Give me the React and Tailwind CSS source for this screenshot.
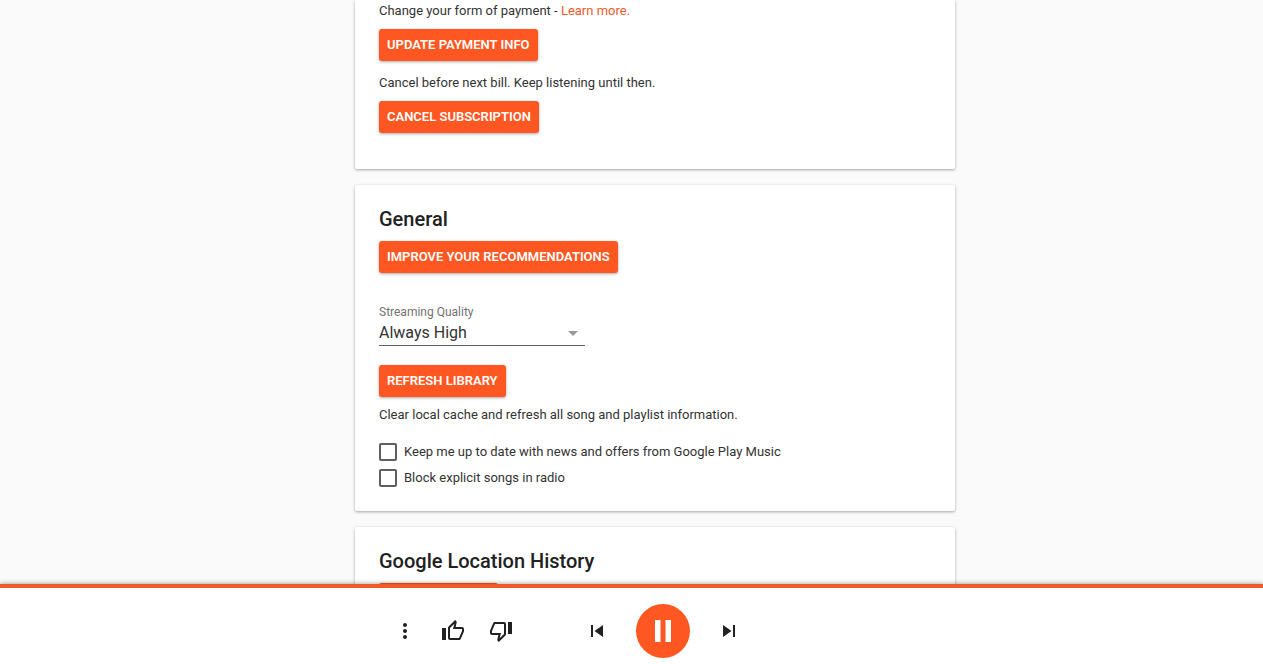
import React, { useState } from "react";
import { MdMoreVert, MdSkipNext, MdSkipPrevious } from "react-icons/md";

const Card = ({ title, className = "", children }) => (
  <section className={`w-full max-w-[600px] shrink-0 bg-white px-6 shadow-[0_1px_3px_rgba(0,0,0,0.35)] ${className}`}>
    {title && <h2 className="mb-2 text-xl leading-7 font-medium text-[#212121]">{title}</h2>}
    {children}
  </section>
);

const ActionButton = ({ label, className = "", children }) => (
  <button
    type="button"
    aria-label={label}
    className={`block h-8 rounded-[3px] bg-[#ff5722] px-2 text-[13px] leading-5 font-semibold whitespace-nowrap text-white uppercase shadow-[0_1px_3px_rgba(0,0,0,0.35)] hover:bg-[#f4511e] ${className}`}
  >
    {children}
  </button>
);

const CheckRow = ({ id, label, checked, onChange }) => (
  <div className="flex h-[18px] items-center gap-[7px]">
    <input
      id={id}
      type="checkbox"
      checked={checked}
      onChange={(e) => onChange(e.target.checked)}
      className="size-[18px] shrink-0 cursor-pointer appearance-none rounded-xs border-2 border-[#5f5f5f] bg-white checked:border-[#ff5722] checked:bg-[#ff5722]"
    />
    <label htmlFor={id} className="cursor-pointer">{label}</label>
  </div>
);

const IconButton = ({ label, onClick, children }) => (
  <button
    type="button"
    aria-label={label}
    onClick={onClick}
    className="flex size-12 items-center justify-center text-[#212121]"
  >
    {children}
  </button>
);

const ThumbUp = () => (
  <svg viewBox="0 0 24 24" className="size-6" fill="currentColor">
    <path d="M9 21h9c.83 0 1.54-.5 1.84-1.22l3.02-7.05c.09-.23.14-.47.14-.73v-2c0-1.1-.9-2-2-2h-6.31l.95-4.57.03-.32c0-.41-.17-.79-.44-1.06L14.17 1 7.58 7.59C7.22 7.95 7 8.45 7 9v10c0 1.1.9 2 2 2zM9 9l4.34-4.34L12 10h9v2l-3 7H9V9zM1 9h4v12H1z" />
  </svg>
);

const ThumbDown = () => (
  <svg viewBox="0 0 24 24" className="size-6" fill="currentColor">
    <path d="M15 3H6c-.83 0-1.54.5-1.84 1.22l-3.02 7.05c-.09.23-.14.47-.14.73v2c0 1.1.9 2 2 2h6.31l-.95 4.57-.03.32c0 .41.17.79.44 1.06L9.83 23l6.59-6.59c.36-.36.58-.86.58-1.41V5c0-1.1-.9-2-2-2zm0 12l-4.34 4.34L12 14H3v-2l3-7h9v10zm4-12h4v12h-4z" />
  </svg>
);

const PlayerBar = () => {
  const [playing, setPlaying] = useState(true);

  return (
    <footer className="relative flex h-20 shrink-0 items-center justify-center border-t-4 border-[#f05a2b] bg-white pt-2.5 pr-[129px] shadow-[0_-1px_4px_rgba(0,0,0,0.3)]">
      <div className="flex">
        <IconButton label="More options"><MdMoreVert size={24} /></IconButton>
        <IconButton label="Thumbs up"><ThumbUp /></IconButton>
        <IconButton label="Thumbs down"><ThumbDown /></IconButton>
      </div>
      <div className="ml-12 flex items-center gap-[15px]">
        <IconButton label="Previous"><MdSkipPrevious size={24} /></IconButton>
        <button
          type="button"
          aria-label={playing ? "Pause" : "Play"}
          onClick={() => setPlaying((p) => !p)}
          className="flex size-[54px] items-center justify-center rounded-full bg-[#ff5722] text-white"
        >
          <svg viewBox="0 0 16 22" className="h-[22px] w-4" fill="currentColor">
            {playing ? <path d="M0 0h5.5v22H0zM10.5 0H16v22h-5.5z" /> : <path d="M1 0l15 11L1 22z" />}
          </svg>
        </button>
        <IconButton label="Next"><MdSkipNext size={24} /></IconButton>
      </div>
    </footer>
  );
};

const App = () => {
  const [quality, setQuality] = useState("high");
  const [news, setNews] = useState(false);
  const [blockExplicit, setBlockExplicit] = useState(false);

  return (
    <div className="flex h-screen flex-col bg-[#fafafa] font-['Roboto',sans-serif] text-[13px] leading-5 text-[#333]">
      <main className="flex min-h-0 flex-1 flex-col items-center gap-4 overflow-hidden pl-[47px]">
        {/* Subscription */}
        <Card className="rounded-b-xs pt-px pb-9">
          <p className="mb-2">
            Change your form of payment - <a href="#payment" className="text-[#f05a2b]">Learn more.</a>
          </p>
          <ActionButton>Update payment info</ActionButton>
          <p className="mt-3 mb-2">Cancel before next bill. Keep listening until then.</p>
          <ActionButton>Cancel subscription</ActionButton>
        </Card>

        {/* General */}
        <Card title="General" className="rounded-xs pt-5 pb-6">
          <ActionButton>Improve your recommendations</ActionButton>

          <div className="mt-[31px] w-[206px]">
            <label htmlFor="quality" className="block text-xs leading-4 text-[#737373]">Streaming Quality</label>
            <div className="relative">
              <select
                id="quality"
                value={quality}
                onChange={(e) => setQuality(e.target.value)}
                className="block h-[26px] w-full cursor-pointer appearance-none border-b border-[#5f5f5f] bg-white text-base leading-6 focus:outline-none"
              >
                <option value="high">Always High</option>
                <option value="normal">Normal</option>
                <option value="low">Low</option>
              </select>
              <svg viewBox="0 0 10 5" className="pointer-events-none absolute top-[11px] right-[7px] h-[5px] w-2.5" fill="#999">
                <path d="M0 0h10L5 5z" />
              </svg>
            </div>
          </div>

          <ActionButton className="mt-[19px]">Refresh library</ActionButton>
          <p className="mt-2">Clear local cache and refresh all song and playlist information.</p>

          <div className="mt-[18px] flex flex-col gap-2">
            <CheckRow
              id="news"
              label="Keep me up to date with news and offers from Google Play Music"
              checked={news}
              onChange={setNews}
            />
            <CheckRow
              id="explicit"
              label="Block explicit songs in radio"
              checked={blockExplicit}
              onChange={setBlockExplicit}
            />
          </div>
        </Card>

        {/* Location history */}
        <Card title="Google Location History" className="rounded-xs pt-5 pb-6">
          <ActionButton label="Manage location history" className="w-[119px]" />
        </Card>
      </main>

      <PlayerBar />
    </div>
  );
};

export default App;
